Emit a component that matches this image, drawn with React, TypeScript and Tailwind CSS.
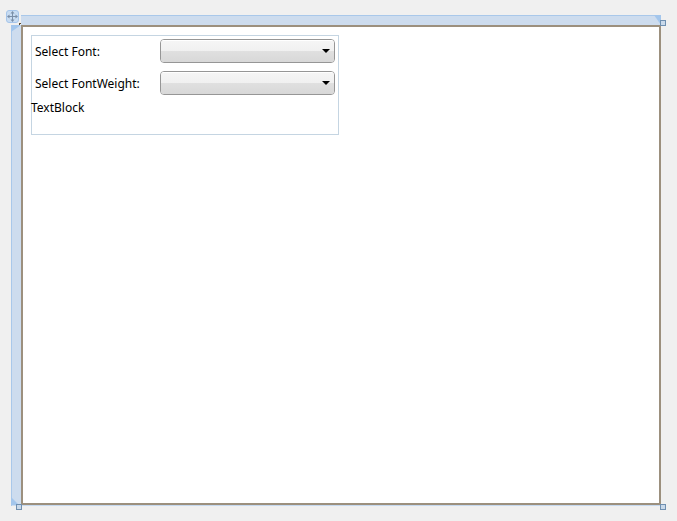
function Combo() {
  return (
    <div className="w-[175px] h-6 rounded-[4px] border border-[#969696] overflow-hidden flex flex-col relative">
      <div className="h-[11px] bg-[linear-gradient(#f5f5f5,#f0f0f0)] border-t border-white" />
      <div className="flex-1 bg-[linear-gradient(#e0e0e0,#d8d8d8)]" />
      <svg className="absolute right-[4px] top-[9px]" width="8" height="4" viewBox="0 0 8 4">
        <path d="M0 0H8L4 4Z" fill="#000" />
      </svg>
    </div>
  );
}

function Row({ label }: { label: string }) {
  return (
    <div className="flex items-center h-6 pl-[3px]">
      <span className="w-[125px] pt-[2px] text-[12px] leading-none text-black">{label}</span>
      <Combo />
    </div>
  );
}

function Handle({ className }: { className: string }) {
  return <div className={"absolute w-[6px] h-[6px] bg-[#c9d9ea] border border-[#6f8fb0] " + className} />;
}

function Tri({ className, d }: { className: string; d: string }) {
  return (
    <svg className={"absolute " + className} width="10" height="10" viewBox="0 0 10 10">
      <path d={d} fill="#a3c6ec" />
    </svg>
  );
}

export default function App() {
  return (
    <div className="relative w-[677px] h-[521px] bg-[#f0f0f0] overflow-hidden pt-[15px] pl-[11px] font-['Noto_Sans',sans-serif]">
      <div className="grid grid-cols-[10px_640px] grid-rows-[10px_481px]">
        <div />
        <div className="bg-[#cddcee] border-t border-[#a9c8ea]" />
        <div className="bg-[#cddcee] border-l border-[#a9c8ea]" />
        <div className="bg-[#c5d9f0]">
          <div className="bg-white border-2 border-[#9c907e] h-[480px] pt-2 pl-2">
            <div className="w-[308px] h-[100px] border border-[#c5d5e2] pt-[3px] flex flex-col">
              <div className="flex flex-col gap-2">
                <Row label="Select Font:" />
                <Row label="Select FontWeight:" />
              </div>
              <div className="mt-[5px] -ml-px text-[12px] leading-[16px] text-black">TextBlock</div>
            </div>
          </div>
        </div>
      </div>
      <Tri className="left-[11px] top-[25px]" d="M0 0H10L0 7Z" />
      <Tri className="left-[11px] top-[495px]" d="M0 2L8 10H0Z" />
      <Tri className="left-[651px] top-[15px]" d="M3 0H10V10Z" />
      <div className="absolute left-[19px] top-[23px] w-[2px] h-[2px] border-t border-l border-[#5a4a30]" />
      <div className="absolute left-[6px] top-[10px] w-[13px] h-[13px] rounded-[3px] bg-[#c8dcf2] border border-[#a5c5ea] flex items-center justify-center">
        <svg width="11" height="11" viewBox="0 0 11 11" fill="#7b8fa8">
          <path d="M5.5 0L7.5 2.5H6V5H8.5V3.5L11 5.5L8.5 7.5V6H6V8.5H7.5L5.5 11L3.5 8.5H5V6H2.5V7.5L0 5.5L2.5 3.5V5H5V2.5H3.5Z" />
        </svg>
      </div>
      <Handle className="left-[660px] top-[20px]" />
      <Handle className="left-[16px] top-[504px]" />
      <Handle className="left-[660px] top-[504px]" />
    </div>
  );
}
